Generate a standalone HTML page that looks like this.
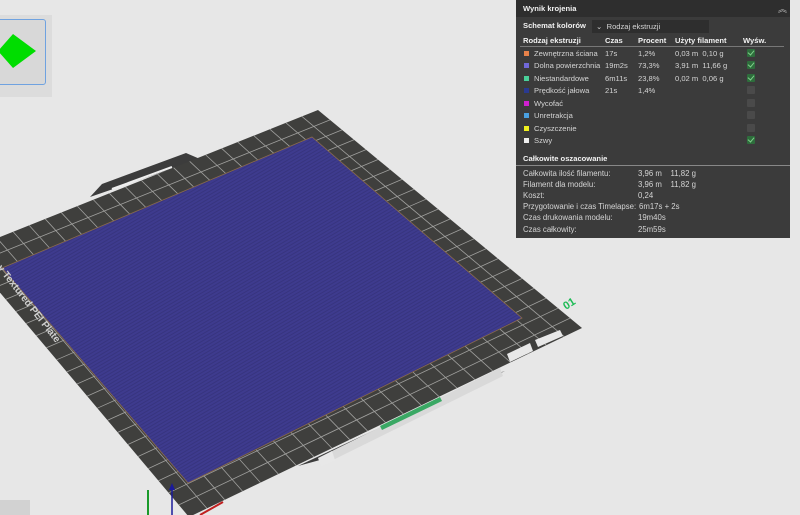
<!DOCTYPE html>
<html><head><meta charset="utf-8"><style>
*{margin:0;padding:0;box-sizing:border-box}
body{width:800px;height:515px;overflow:hidden;background:#e7e7e7;font-family:"Liberation Sans",sans-serif;position:relative}
#panel{position:absolute;left:516px;top:0;width:274px;height:238px;background:#3b3b3b;color:#d4d4d4;font-size:7.6px}
#panel .t{position:absolute;white-space:nowrap}
#panel .s{font-size:7.8px}
.b{font-weight:bold;color:#f2f2f2}
.sq{position:absolute;width:5px;height:5px}
.cb{position:absolute;width:8px;height:8px;background:#4a4a4a;border-radius:1px}
.cb.on{background:#2e6d3c}
.cb.on::after{content:"";position:absolute;left:2px;top:0px;width:3px;height:5px;border:solid #7fd08a;border-width:0 1.3px 1.3px 0;transform:rotate(40deg)}
</style></head><body>
<svg width="800" height="515" style="position:absolute;left:0;top:0">
  <defs>
    <pattern id="st" width="3" height="3" patternUnits="userSpaceOnUse" patternTransform="rotate(-30)">
      <rect width="3" height="3" fill="#3e3b8e"/><rect width="3" height="1" fill="#37347f"/>
    </pattern>
    <clipPath id="pc"><polygon points="-35,251 318,110 582,328 189,517"/></clipPath>
  </defs>
  <rect x="0" y="500" width="30" height="15" fill="#d2d2d2"/>
  <polygon points="90,197 102,184 186,153 200,159" fill="#3c3c3c"/>
  <line x1="112" y1="189" x2="172" y2="167" stroke="#eee" stroke-width="2"/>
  <polygon points="298,466 320,460 505,371 490,376" fill="#3c3c3c"/>
  <polygon points="-35,251 318,110 582,328 189,517" fill="#3f3f3d"/>
  <g id="grid" clip-path="url(#pc)" stroke="#a0a09e" stroke-width="0.8"></g>
  <polygon points="2,268 312,137 522,318 188,483" fill="url(#st)" stroke="#8a6a4a" stroke-width="0.8"/>
  <polygon points="330,452 500,368 503,376 333,460" fill="#d9d9d9"/>
  <polygon points="380,426 440,397 442,401 382,430" fill="#3aa864"/>
  <polygon points="318,458 332,451 335,460 321,466" fill="#e8e8e8"/>
  <polygon points="507,354 530,343 533,351 510,362" fill="#e8e8e8"/>
  <polygon points="535,340 560,330 563,336 538,347" fill="#e8e8e8"/>
  <text x="0" y="0" transform="translate(566,310) rotate(-33)" font-size="11" font-weight="bold" fill="#1dbb55">01</text>
  <text x="0" y="0" transform="translate(-3,268) rotate(52)" font-size="10" font-weight="bold" fill="#cfcfcf">y Textured PEI Plate</text>
  <line x1="148" y1="515" x2="148" y2="490" stroke="#1a9a2a" stroke-width="2"/>
  <line x1="172" y1="515" x2="172" y2="487" stroke="#1a1a9a" stroke-width="1.5"/>
  <polygon points="169,490 172,483 175,490" fill="#1a1a9a"/>
  <line x1="200" y1="515" x2="223" y2="502" stroke="#c02020" stroke-width="2"/>
</svg>
<div style="position:absolute;left:0;top:15px;width:52px;height:82px;background:#dcdcdc"></div>
<div style="position:absolute;left:-4px;top:19px;width:50px;height:66px;background:#d8d8d8;border:1px solid #6fa2e0;border-radius:3px"></div>
<svg width="52" height="100" style="position:absolute;left:0;top:0"><polygon points="-2,51 13,34 36,51 13,68" fill="#00dd00"/></svg>

<div id="panel">
  <div style="position:absolute;left:0;top:0;width:274px;height:17px;background:#2e2e2e"></div>
  <div class="t b" style="left:7px;top:4px">Wynik krojenia</div>
  <div class="t" style="left:262px;top:2px;color:#bbb;font-size:9px">︽</div>
  <div class="t b" style="left:7px;top:21px">Schemat kolorów</div>
  <div style="position:absolute;left:76px;top:20px;width:117px;height:13px;background:#2e2e2e"></div>
  <div class="t" style="left:80px;top:22px">⌄&nbsp; Rodzaj ekstruzji</div>
  <div class="t b" style="left:7px;top:36px">Rodzaj ekstruzji</div>
  <div class="t b" style="left:89px;top:36px">Czas</div>
  <div class="t b" style="left:122px;top:36px">Procent</div>
  <div class="t b" style="left:159px;top:36px">Użyty filament</div>
  <div class="t b" style="left:227px;top:36px">Wyśw.</div>
  <div style="position:absolute;left:4px;top:46px;width:264px;height:1px;background:#777"></div>

  <div class="sq" style="left:8px;top:51px;background:#e8824a"></div><div class="t" style="left:18px;top:49px">Zewnętrzna ściana</div><div class="t" style="left:89px;top:49px">17s</div><div class="t" style="left:122px;top:49px">1,2%</div><div class="t" style="left:159px;top:49px">0,03 m&nbsp; 0,10 g</div><div class="cb on" style="left:231px;top:49px"></div>
  <div class="sq" style="left:8px;top:63px;background:#7068d8"></div><div class="t" style="left:18px;top:61px">Dolna powierzchnia</div><div class="t" style="left:89px;top:61px">19m2s</div><div class="t" style="left:122px;top:61px">73,3%</div><div class="t" style="left:159px;top:61px">3,91 m&nbsp; 11,66 g</div><div class="cb on" style="left:231px;top:61px"></div>
  <div class="sq" style="left:8px;top:76px;background:#4ad09a"></div><div class="t" style="left:18px;top:74px">Niestandardowe</div><div class="t" style="left:89px;top:74px">6m11s</div><div class="t" style="left:122px;top:74px">23,8%</div><div class="t" style="left:159px;top:74px">0,02 m&nbsp; 0,06 g</div><div class="cb on" style="left:231px;top:74px"></div>
  <div class="sq" style="left:8px;top:88px;background:#2a3a90"></div><div class="t" style="left:18px;top:86px">Prędkość jałowa</div><div class="t" style="left:89px;top:86px">21s</div><div class="t" style="left:122px;top:86px">1,4%</div><div class="cb" style="left:231px;top:86px"></div>
  <div class="sq" style="left:8px;top:101px;background:#d020d0"></div><div class="t" style="left:18px;top:99px">Wycofać</div><div class="cb" style="left:231px;top:99px"></div>
  <div class="sq" style="left:8px;top:113px;background:#4aa0e0"></div><div class="t" style="left:18px;top:111px">Unretrakcja</div><div class="cb" style="left:231px;top:111px"></div>
  <div class="sq" style="left:8px;top:126px;background:#f0f020"></div><div class="t" style="left:18px;top:124px">Czyszczenie</div><div class="cb" style="left:231px;top:124px"></div>
  <div class="sq" style="left:8px;top:138px;background:#eee"></div><div class="t" style="left:18px;top:136px">Szwy</div><div class="cb on" style="left:231px;top:136px"></div>

  <div class="t b" style="left:7px;top:154px">Całkowite oszacowanie</div>
  <div style="position:absolute;left:0;top:165px;width:274px;height:1px;background:#888"></div>
  <div class="t s" style="left:7px;top:169px">Całkowita ilość filamentu:</div><div class="t s" style="left:122px;top:169px">3,96 m&nbsp;&nbsp;&nbsp; 11,82 g</div>
  <div class="t s" style="left:7px;top:180px">Filament dla modelu:</div><div class="t s" style="left:122px;top:180px">3,96 m&nbsp;&nbsp;&nbsp; 11,82 g</div>
  <div class="t s" style="left:7px;top:191px">Koszt:</div><div class="t s" style="left:122px;top:191px">0,24</div>
  <div class="t s" style="left:7px;top:202px">Przygotowanie i czas Timelapse:</div><div class="t s" style="left:123px;top:202px">6m17s + 2s</div>
  <div class="t s" style="left:7px;top:213px">Czas drukowania modelu:</div><div class="t s" style="left:122px;top:213px">19m40s</div>
  <div class="t s" style="left:7px;top:225px">Czas całkowity:</div><div class="t s" style="left:122px;top:225px">25m59s</div>
</div>
<script>
(function(){
var L=[-35,251],T=[318,110],R=[582,328],B=[189,517];
function lp(a,b,t){return [a[0]+(b[0]-a[0])*t,a[1]+(b[1]-a[1])*t];}
var g=document.getElementById('grid'),s='',N=22;
for(var i=1;i<N;i++){var t=i/N;
 var p=lp(L,T,t),q=lp(B,R,t);s+='<line x1="'+p[0]+'" y1="'+p[1]+'" x2="'+q[0]+'" y2="'+q[1]+'"/>';
 p=lp(T,R,t);q=lp(L,B,t);s+='<line x1="'+p[0]+'" y1="'+p[1]+'" x2="'+q[0]+'" y2="'+q[1]+'"/>';}
g.innerHTML=s;
})();
</script>
</body></html>
